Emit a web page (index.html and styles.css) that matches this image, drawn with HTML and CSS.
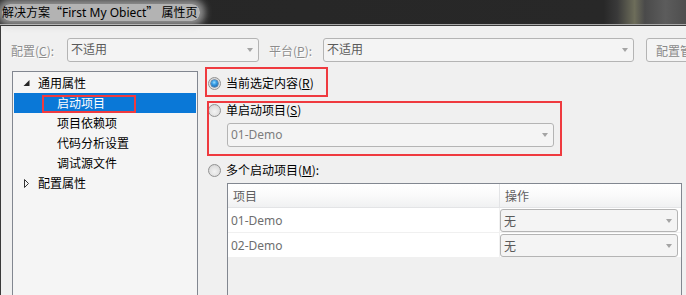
FILE: index.html
```html
<!DOCTYPE html>
<html lang="zh-CN">
<head>
<meta charset="utf-8">
<title>属性页</title>
<link rel="stylesheet" href="styles.css">
</head>
<body>
<div class="window">
  <div class="titlebar">
    <span class="title">解决方案<span class="cjk">“</span>First My Obiect<span class="cjk">”</span>&nbsp;属性页</span>
  </div>
  <div class="content">
    <div class="toprow">
      <span class="lbl lbl-config">配置(<u>C</u>):</span>
      <div class="combo combo-config"><span class="combo-text">不适用</span><i class="arrow"></i></div>
      <span class="lbl lbl-platform">平台(<u>P</u>):</span>
      <div class="combo combo-platform"><span class="combo-text">不适用</span><i class="arrow"></i></div>
      <div class="btn">配置管理器(<u>O</u>)...</div>
    </div>
    <div class="main">
      <div class="tree">
        <div class="node lvl0">
          <svg class="tw" width="16" height="20" viewBox="0 0 16 20"><path d="M7.5 7 L7.5 13 L1.5 13 Z" fill="#262626"/></svg>
          <span>通用属性</span>
        </div>
        <div class="node lvl1 selected">
          <span>启动项目</span>
          <div class="mark mark-tree"></div>
        </div>
        <div class="node lvl1"><span>项目依赖项</span></div>
        <div class="node lvl1"><span>代码分析设置</span></div>
        <div class="node lvl1"><span>调试源文件</span></div>
        <div class="node lvl0">
          <svg class="tw" width="16" height="20" viewBox="0 0 16 20"><path d="M2.5 6.5 L2.5 14.5 L6.5 10.5 Z" fill="none" stroke="#333" stroke-width="1"/></svg>
          <span>配置属性</span>
        </div>
      </div>
      <div class="panel">
        <div class="radio-row r1"><i class="radio checked"></i><span>当前选定内容(<u>R</u>)</span></div>
        <div class="radio-row r2"><i class="radio"></i><span>单启动项目(<u>S</u>)</span></div>
        <div class="combo combo-single"><span class="combo-text latin">01-Demo</span><i class="arrow"></i></div>
        <div class="radio-row r3"><i class="radio"></i><span>多个启动项目(<u>M</u>):</span></div>
        <div class="table">
          <div class="thead">
            <div class="th th-name">项目</div>
            <div class="th th-op">操作</div>
          </div>
          <div class="trow">
            <div class="td td-name latin">01-Demo</div>
            <div class="td td-op"><div class="combo combo-row"><span class="combo-text">无</span><i class="arrow"></i></div></div>
          </div>
          <div class="trow">
            <div class="td td-name latin">02-Demo</div>
            <div class="td td-op"><div class="combo combo-row"><span class="combo-text">无</span><i class="arrow"></i></div></div>
          </div>
        </div>
        <div class="mark mark-r1"></div>
        <div class="mark mark-r2"></div>
      </div>
    </div>
  </div>
</div>
</body>
</html>
```

FILE: styles.css
```css
* { box-sizing: border-box; }
html, body { margin: 0; padding: 0; }
body {
  font-family: "Noto Sans", "Noto Sans CJK SC", sans-serif;
  font-size: 12px;
  color: #000;
  background: #f0f0f0;
}
u { text-decoration: underline; text-underline-offset: 1px; }
.cjk { font-family: "Noto Sans CJK SC", sans-serif; }
.latin { font-family: "Noto Sans", sans-serif; }

.window {
  width: 686px;
  height: 295px;
  overflow: hidden;
  display: flex;
  flex-direction: column;
  background: #f0f0f0;
}

.titlebar {
  height: 25px;
  flex: none;
  border-bottom: 1px solid #a9a9a9;
  background: linear-gradient(to right, #262626 0%, #282828 88%, #3a3a3a 90%, #6d6d5a 92.5%, #4a4a4a 94%, #5c5c5c 97%, #4e4e4e 100%);
  display: flex;
  align-items: center;
  padding-left: 2px;
}
.title {
  font-family: "Noto Sans", "Noto Sans CJK SC", sans-serif;
  font-size: 12px;
  color: #000;
  white-space: pre;
  line-height: 16px;
  padding: 0 2px 0 0;
  background: rgba(215, 215, 215, 0.8);
  border-radius: 8px;
  box-shadow: 0 0 7px 5px rgba(200, 200, 200, 0.65);
}

.content {
  flex: 1;
  display: flex;
  flex-direction: column;
  border-top: 1px solid #3a3a3a;
  border-left: 1px solid #3a3a3a;
  min-height: 0;
  overflow: hidden;
}

.toprow {
  display: flex;
  align-items: center;
  margin-top: 12px;
  padding-left: 10px;
  height: 24px;
  flex: none;
  overflow: hidden;
}
.toprow > * { flex: none; }
.lbl {
  color: #8d8d8d;
  text-shadow: 1px 1px 0 #fff;
  font-family: "Noto Sans CJK SC", sans-serif;
  white-space: nowrap;
}
.lbl-config { width: 56px; }
.lbl-platform { width: 54px; margin-left: 10px; }

.combo {
  position: relative;
  height: 24px;
  border: 1px solid #b4b4b4;
  border-radius: 3px;
  background: #f4f4f4;
  display: flex;
  align-items: center;
  padding-left: 3px;
  color: #5a5a5a;
  flex: none;
  white-space: nowrap;
}
.combo-text { line-height: 16px; }
.arrow {
  position: absolute;
  right: 5px;
  top: 50%;
  margin-top: -2px;
  width: 0;
  height: 0;
  border-left: 3.5px solid transparent;
  border-right: 3.5px solid transparent;
  border-top: 4px solid #a4a4a4;
}
.combo-config { width: 192px; }
.combo-platform { width: 311px; }
.btn {
  margin-left: 12px;
  height: 24px;
  width: 120px;
  border: 1px solid #b4b4b4;
  border-radius: 3px;
  background: #f4f4f4;
  color: #8a8a8a;
  display: flex;
  align-items: center;
  padding-left: 9px;
  white-space: nowrap;
  font-family: "Noto Sans CJK SC", sans-serif;
}

.main {
  flex: 1;
  display: flex;
  margin-top: 9px;
  padding-left: 11px;
  min-height: 0;
}

.tree {
  width: 186px;
  flex: none;
  border: 1px solid #828790;
  border-bottom: none;
  background: #f5f5f5;
  padding: 1px 1px 0 1px;
  font-family: "Noto Sans CJK SC", sans-serif;
}
.node {
  position: relative;
  height: 20px;
  display: flex;
  align-items: center;
  white-space: nowrap;
}
.node span { line-height: 20px; }
.lvl0 { padding-left: 8px; }
.tw { flex: none; display: block; }
.lvl1 { padding-left: 43px; }
.selected { background: #0a78d7; color: #fff; }

.mark {
  position: absolute;
  border: 2px solid #ef3a3f;
  pointer-events: none;
}
.mark-tree { left: 28px; top: 2px; width: 94px; height: 18px; }

.panel {
  flex: 1;
  position: relative;
  display: flex;
  flex-direction: column;
  padding-left: 10px;
  padding-top: 2px;
  font-family: "Noto Sans CJK SC", sans-serif;
  min-width: 0;
}
.radio-row {
  display: flex;
  align-items: center;
  gap: 5px;
  height: 20px;
  flex: none;
}
.radio-row span { line-height: 20px; }
.radio {
  position: relative;
  width: 13px;
  height: 13px;
  border-radius: 50%;
  border: 1px solid #929292;
  background: radial-gradient(circle at 50% 60%, #f3f3f3 0%, #e1e1e1 55%, #cdcdcd 100%);
  flex: none;
}
.radio.checked::after {
  content: "";
  position: absolute;
  left: 2px;
  top: 2px;
  width: 7px;
  height: 7px;
  border-radius: 50%;
  background: radial-gradient(circle at 45% 35%, #9fe0ff 0%, #3aa0e8 35%, #0d4f94 100%);
  box-shadow: 0 0 0 0.5px #1c4a7a;
}
.r2 { margin-top: 7px; }
.combo-single {
  width: 327px;
  margin: 3px 0 0 19px;
  color: #7d7d7d;
}
.r3 { margin-top: 13px; }

.table {
  margin: 3px 0 0 19px;
  width: 455px;
  flex: 1;
  border: 1px solid #828790;
  border-bottom: none;
  background: #f0f0f0;
  display: flex;
  flex-direction: column;
}
.thead, .trow {
  display: grid;
  grid-template-columns: 272px 1fr;
  flex: none;
}
.thead {
  height: 24px;
  background: linear-gradient(to bottom, #ffffff 0%, #fafafa 50%, #f0f1f2 100%);
  border-bottom: 1px solid #e3e4e6;
}
.th {
  display: flex;
  align-items: center;
  padding-left: 5px;
  color: #5e5e5e;
}
.th-name { border-right: 1px solid #e3e4e6; }
.trow {
  height: 25px;
  background: #fff;
  border-bottom: 1px solid #f0f0f0;
}
.td-name {
  display: flex;
  align-items: center;
  padding-left: 3px;
  color: #6e6e6e;
  border-right: 1px solid #f0f0f0;
}
.td-op { padding: 1px 2px 0 0; }
.combo-row {
  width: 178px;
  height: 23px;
  color: #5a5a5a;
}

.mark-r1 { left: 7px; top: -4px; width: 123px; height: 30px; }
.mark-r2 { left: 9px; top: 30px; width: 355px; height: 55px; }
```
